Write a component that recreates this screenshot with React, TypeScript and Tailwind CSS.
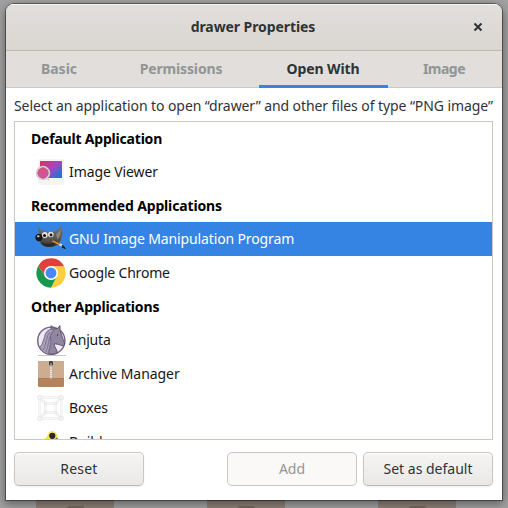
import type { ReactNode } from "react";

function ImageViewerIcon() {
  return (
    <svg width="32" height="32" viewBox="0 0 32 32">
      <defs>
        <linearGradient id="iv" x1="0" y1="0" x2="1" y2="0.8">
          <stop offset="0" stopColor="#e0305a" />
          <stop offset="0.55" stopColor="#a545c0" />
          <stop offset="1" stopColor="#1a74dd" />
        </linearGradient>
        <linearGradient id="ivl" x1="0" y1="0" x2="0" y2="1">
          <stop offset="0" stopColor="#e0507f" />
          <stop offset="1" stopColor="#c458a8" />
        </linearGradient>
      </defs>
      <rect x="3" y="3" width="26" height="26" rx="2" fill="#f5f4f2" />
      <rect x="5" y="5" width="22" height="17" fill="url(#iv)" />
      <circle cx="8" cy="17" r="7.2" fill="#c9c5c1" />
      <circle cx="8" cy="17" r="6.5" fill="#eeeae7" />
      <path d="M12 22l2 2" stroke="#d8d4d0" strokeWidth="2" />
      <circle cx="8" cy="17" r="5.4" fill="url(#ivl)" stroke="#b64b83" strokeWidth="0.6" />
    </svg>
  );
}

function GimpIcon() {
  return (
    <svg width="32" height="32" viewBox="0 0 32 32">
      <defs>
        <linearGradient id="fur" x1="0" y1="0" x2="0" y2="1">
          <stop offset="0" stopColor="#77736a" />
          <stop offset="0.6" stopColor="#59564e" />
          <stop offset="1" stopColor="#35342f" />
        </linearGradient>
      </defs>
      <path d="M3 4C5 7 8 8 11 8.5C15 9 18 9.5 20 8.5C23 7 25 5 26.3 2.5C28 8 27.5 14 25.5 18C23.5 22 19 24 14 24C9 24 5 21.5 4.5 17L5.5 11C3.5 9 2.5 7 3 4Z" fill="url(#fur)" />
      <path d="M21 11C23 10 24.5 8 25.6 5.5C26.2 10 25 14 22.5 16.5Z" fill="#8b867c" />
      <path d="M6 19C10 21.5 17 21.5 22 18.5C20 22.5 16 24 12.5 23.6C9.5 23.2 7 21.5 6 19Z" fill="#282a2a" />
      <ellipse cx="4" cy="14.6" rx="3.6" ry="3.8" fill="#171a1b" />
      <ellipse cx="3.3" cy="13.2" rx="1.3" ry="1" fill="#c9cdcf" />
      <circle cx="9.8" cy="12" r="2.9" fill="#e4e2dd" />
      <circle cx="15.8" cy="11.5" r="2.8" fill="#e4e2dd" />
      <circle cx="9.5" cy="12.4" r="1.5" fill="#151515" />
      <circle cx="16" cy="12" r="1.4" fill="#151515" />
      <path d="M17.5 18L25 21.5" stroke="#e38a28" strokeWidth="1.7" />
      <path d="M24.5 21.2L28 23.3" stroke="#d8d8d2" strokeWidth="2.2" />
      <path d="M27.5 22L30.5 25.5L27 24.3Z" fill="#202327" stroke="#202327" />
    </svg>
  );
}

function ChromeIcon() {
  return (
    <svg width="32" height="32" viewBox="0 0 48 48">
      <path d="M24 14H43.6A22 22 0 0 1 24 46L32.7 29Z" fill="#fdce3c" />
      <path d="M4.95 13L15.3 29L24 34L32.7 29L24 46A22 22 0 0 1 4.95 13Z" fill="#16984f" />
      <path d="M4.95 13A22 22 0 0 1 43.6 14H24L15.3 29Z" fill="#e0413a" />
      <circle cx="24" cy="24" r="10.5" fill="#fff" />
      <circle cx="24" cy="24" r="8.2" fill="#4688f1" />
    </svg>
  );
}

function AnjutaIcon() {
  return (
    <svg width="32" height="32" viewBox="0 0 32 32">
      <path d="M3 31.5H31" stroke="#c8c8c8" />
      <circle cx="16.3" cy="16.7" r="13.6" fill="#efebf5" stroke="#736485" strokeWidth="1.4" />
      <path d="M16 6L16.2 1.6L19 4.6L22.6 4.6L25 1.6L25 6.5C26.4 10 27.5 14 29.4 18.5C30 20.8 28.4 22.5 26.4 21.6C24 20 21.4 20.4 19.4 19.6C18.5 22 22 25 22.4 29C18 31 11 30.6 7.5 27C11 21 10 12 16 6Z" fill="#9186a0" stroke="#594b69" strokeWidth="0.9" />
      <path d="M17 5C10 6 10 12 8.5 16C7.4 19.5 6 22 4.8 23.5C7 28 11 30 14 30C13 25 17 20 15.5 14C15.2 10 17 8 19 6Z" fill="#a99fb8" stroke="#665877" strokeWidth="0.8" />
      <path d="M15 8C10.5 13 12 20 8 26M16 10C13 16 14 21 11 28" fill="none" stroke="#75688a" strokeWidth="0.8" />
      <circle cx="22.6" cy="11" r="0.8" fill="#463a55" />
    </svg>
  );
}

function ArchiveIcon() {
  return (
    <svg width="32" height="32" viewBox="0 0 32 32">
      <rect x="3" y="3" width="26" height="26" rx="1.2" fill="#b58259" />
      <path d="M3 4Q3 3 4 3H28Q29 3 29 4V20.5H3Z" fill="#ceac8f" />
      <path d="M3 20.5H29" stroke="#a77650" strokeWidth="0.8" />
      <path d="M16 7V20.5" stroke="#b8a391" strokeWidth="2.8" />
      <path d="M16 7V20.5" stroke="#eee9e4" strokeWidth="2.2" strokeDasharray="1.6 0.6" />
      <rect x="14" y="3" width="4" height="4.6" rx="1" fill="#41464b" />
      <path d="M16 5V9" stroke="#a4abb0" strokeWidth="1.2" />
    </svg>
  );
}

function BoxesIcon() {
  const frame = "M4.5 5.5H26.5V26.5H4.5ZM10.5 11.5H20.5V20.5H10.5ZM4.5 5.5L10.5 11.5M26.5 5.5L20.5 11.5M4.5 26.5L10.5 20.5M26.5 26.5L20.5 20.5";
  return (
    <svg width="32" height="32" viewBox="0 0 32 32">
      <path d={frame} fill="none" stroke="#e4e4e4" strokeWidth="2" />
      <path d={frame} fill="none" stroke="#f8f8f8" strokeWidth="1.2" />
      <g fill="#f5f5f5" stroke="#dedede" strokeWidth="0.6">
        <circle cx="4.8" cy="5.5" r="2.2" /><circle cx="26.2" cy="5.5" r="2.2" />
        <circle cx="4.8" cy="26.5" r="2.2" /><circle cx="26.2" cy="26.5" r="2.2" />
        <circle cx="10.5" cy="11.5" r="1.4" /><circle cx="20.5" cy="11.5" r="1.4" />
        <circle cx="10.5" cy="20.5" r="1.4" /><circle cx="20.5" cy="20.5" r="1.4" />
      </g>
    </svg>
  );
}

function BuilderIcon() {
  return (
    <svg width="32" height="32" viewBox="0 0 32 32">
      <path d="M5 14.5C8 12 10 13.5 12 11C13 5 21 4 22.5 10V20H8Z" fill="#f5dc42" />
      <path d="M17 14L22.5 11.5L24 20H16Z" fill="#6d6873" />
      <circle cx="17.3" cy="9.4" r="4.4" fill="#f8e55b" />
      <circle cx="17.3" cy="9.8" r="3.1" fill="#292531" />
    </svg>
  );
}

function Heading({ children }: { children: ReactNode }) {
  return <h2 className="flex h-[33px] items-center pl-4 text-[14px] leading-5 font-bold tracking-[-0.15px] text-black">{children}</h2>;
}

function AppRow({ icon, label, tracking = "tracking-[-0.1px]", selected = false }: { icon: ReactNode; label: string; tracking?: string; selected?: boolean }) {
  return (
    <div className={`flex h-[34px] items-center gap-[2px] pl-5 ${selected ? "bg-[#3584e4] text-white" : "text-[#161616]"}`}>
      <span className="size-8 shrink-0">{icon}</span>
      <span className={tracking}>{label}</span>
    </div>
  );
}

const button = "flex h-[34px] w-[130px] items-center justify-center rounded-[5px] border border-[#cdc7c2]";
const raised = "border-b-[#bfb8b1] bg-linear-to-b from-[#f6f5f4] to-[#eae8e6] shadow-[0_1px_2px_rgba(0,0,0,0.07),inset_0_1px_#ffffff]";

function Thumbnail() {
  return (
    <div className="flex h-[8px] w-[78px] items-end justify-center overflow-hidden bg-[#8d817a]">
      <div className="h-[2px] w-[17px] rounded-t-full bg-[#75675d]" />
    </div>
  );
}

export default function App() {
  return (
    <div className="relative flex h-[508px] w-[508px] flex-col overflow-hidden bg-[#a0a0a0] px-1.5 pt-1 font-['Noto_Sans','Open_Sans',sans-serif] text-[14px] leading-5 whitespace-nowrap text-[#2e3436]">
      <div className="absolute bottom-0 left-9 flex gap-[93px]">
        <Thumbnail />
        <Thumbnail />
        <Thumbnail />
      </div>
      <main className="relative flex h-[496px] w-[496px] shrink-0 flex-col overflow-hidden rounded-t-[8px] bg-white shadow-[0_0_0_1px_rgba(0,0,0,0.4),0_3px_9px_1px_rgba(0,0,0,0.4)]">
        <header className="relative flex h-[47px] shrink-0 items-center justify-center border-b border-[#bfb8b1] bg-linear-to-b from-[#e1dedb] to-[#dad6d2] font-bold shadow-[inset_0_1px_#f8f7f7]">
          <h1 className="-ml-[2px] tracking-[-0.08px]">drawer Properties</h1>
          <button className="absolute top-[18px] right-[19px]" aria-label="Close">
            <svg width="10" height="10" viewBox="0 0 10 10" className="block">
              <path d="M1.5 1.5L8.5 8.5M8.5 1.5L1.5 8.5" stroke="#2e3436" strokeWidth="2.1" />
            </svg>
          </button>
        </header>
        <nav className="flex h-[37px] shrink-0 border-b border-[#cdc7c2] bg-[#e1dedb] text-center leading-9 font-bold text-[#929595]">
          <span className="w-[106px]">Basic</span>
          <span className="mr-[9px] w-[138px] tracking-[-0.15px]">Permissions</span>
          <span className="h-[37px] w-[129px] border-b-3 border-[#3584e4] pr-px tracking-[-0.1px] text-[#2e3436]">Open With</span>
          <span className="w-[112px] tracking-[-0.5px]">Image</span>
        </nav>
        <section className="flex min-h-0 flex-1 flex-col px-2">
          <p className="flex h-[33px] items-center pt-[3px] tracking-[-0.085px]">
            Select an application to open “drawer” and other files of type “PNG image”
          </p>
          <div className="h-[319px] w-[479px] shrink-0 overflow-hidden border border-[#cdc7c2] bg-white">
            <Heading><span className="tracking-[-0.2px]">Default Application</span></Heading>
            <AppRow icon={<ImageViewerIcon />} label="Image Viewer" />
            <Heading>Recommended Applications</Heading>
            <AppRow icon={<GimpIcon />} label="GNU Image Manipulation Program" tracking="tracking-[-0.13px]" selected />
            <AppRow icon={<ChromeIcon />} label="Google Chrome" tracking="tracking-[-0.2px]" />
            <Heading>Other Applications</Heading>
            <AppRow icon={<AnjutaIcon />} label="Anjuta" tracking="tracking-[-0.2px]" />
            <AppRow icon={<ArchiveIcon />} label="Archive Manager" tracking="tracking-[-0.05px]" />
            <AppRow icon={<BoxesIcon />} label="Boxes" tracking="tracking-normal" />
            <AppRow icon={<BuilderIcon />} label="Builder" tracking="tracking-normal" />
          </div>
          <footer className="mt-3 flex w-[479px]">
            <button className={`${button} ${raised} tracking-[0.2px]`}>Reset</button>
            <button className={`${button} mr-1.5 ml-auto bg-[#faf9f8] text-[#929595]`}>Add</button>
            <button className={`${button} ${raised}`}>Set as default</button>
          </footer>
        </section>
      </main>
    </div>
  );
}
